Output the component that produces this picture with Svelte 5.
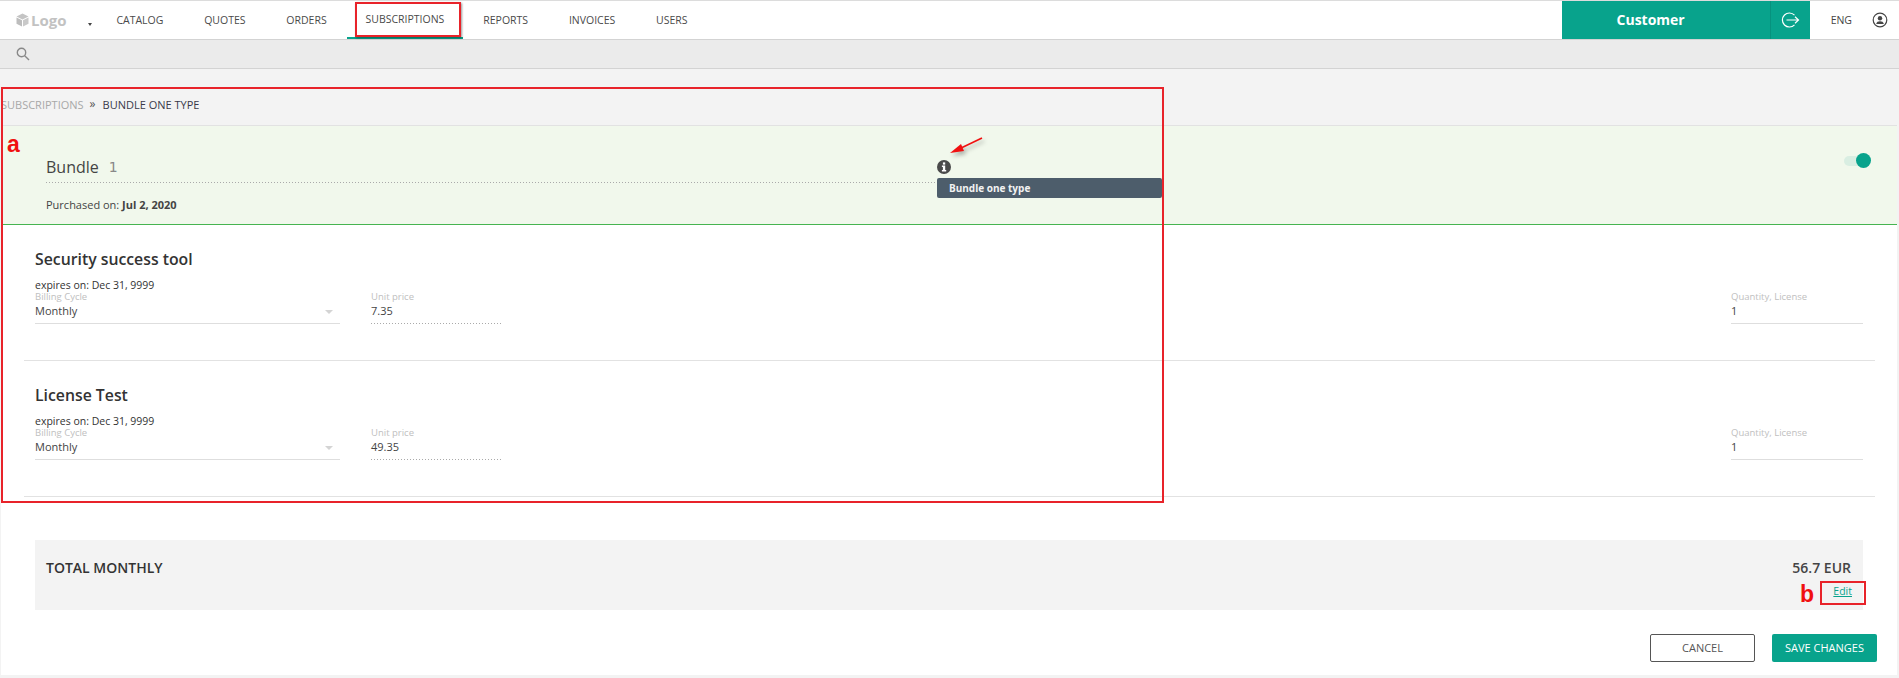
<script>
let items = [
    { name: "Security success tool", price: "7.35" },
    { name: "License Test", price: "49.35" }
];
let nav = ["CATALOG", "QUOTES", "ORDERS", "SUBSCRIPTIONS", "REPORTS", "INVOICES", "USERS"];
</script>

<div class="page">
    <header class="topbar">
        <div class="logo">
            <svg width="13" height="14" viewBox="0 0 13 14"><path d="M6.5 0.5 12.5 3.5 6.5 6.5 0.5 3.5Z" fill="#c4c4c4"/><path d="M0.5 4.5 6 7.2V13.5L0.5 10.7Z" fill="#bdbdbd"/><path d="M12.5 4.5 7 7.2V13.5L12.5 10.7Z" fill="#c9c9c9"/></svg>
            <span>Logo</span>
        </div>
        <span class="caret"></span>
        <nav>
            {#each nav as link}
                <span class="nav_item" class:active={link == "SUBSCRIPTIONS"}>{link}</span>
            {/each}
        </nav>
        <div class="customer">
            <div class="customer_name">Customer</div>
            <div class="logout">
                <svg width="20" height="18" viewBox="0 0 20 18" fill="none" stroke="#fff" stroke-width="1.2"><path d="M14.5 4.2A7 7 0 1 0 14.5 13.8"/><path d="M6.5 9H18.5M15 5.8 18.5 9 15 12.2"/></svg>
            </div>
        </div>
        <span class="lang">ENG</span>
        <svg class="user" width="16" height="16" viewBox="0 0 16 16"><circle cx="8" cy="8" r="6.8" fill="none" stroke="#444" stroke-width="1.2"/><circle cx="8" cy="6.2" r="2.2" fill="#444"/><path d="M4.2 12C4.6 9.8 6 9.2 8 9.2S11.4 9.8 11.8 12Z" fill="#444"/></svg>
    </header>

    <div class="searchbar">
        <svg width="14" height="14" viewBox="0 0 14 14" fill="none" stroke="#888" stroke-width="1.4"><circle cx="5.5" cy="5.5" r="4.2"/><path d="M8.7 8.7 13 13"/></svg>
    </div>

    <div class="crumbs">
        <span class="crumb_link">SUBSCRIPTIONS</span>
        <span class="crumb_sep">»</span>
        <span class="crumb_now">BUNDLE ONE TYPE</span>
    </div>

    <section class="bundle">
        <div class="bundle_left">
            <div class="bundle_title dotted"><span>Bundle</span><span class="bundle_num">1</span></div>
            <div class="purchased">Purchased on: <b>Jul 2, 2020</b></div>
        </div>
        <div class="bundle_info">
            <svg width="14" height="14" viewBox="0 0 14 14"><circle cx="7" cy="7" r="7" fill="#4a4a4a"/><rect x="5.9" y="2.4" width="2.3" height="2.2" fill="#fff"/><path d="M4.9 5.6H8.2V10.1H9.2V11.5H4.9V10.1H5.9V7H4.9Z" fill="#fff"/></svg>
            <div class="tooltip">Bundle one type</div>
        </div>
        <div class="toggle"><span class="knob"></span></div>
    </section>

    <main class="content">
        {#each items as item}
            <div class="item">
                <h3>{item.name}</h3>
                <div class="expires">expires on: Dec 31, 9999</div>
                <div class="fields">
                    <div class="field billing">
                        <label>Billing Cycle</label>
                        <div class="value">Monthly<span class="arrow"></span></div>
                    </div>
                    <div class="field price">
                        <label>Unit price</label>
                        <div class="value dotted">{item.price}</div>
                    </div>
                    <div class="field qty">
                        <label>Quantity, License</label>
                        <div class="value">1</div>
                    </div>
                </div>
            </div>
        {/each}

        <div class="total">
            <span class="total_label">TOTAL MONTHLY</span>
            <div class="total_right">
                <span class="total_sum">56.7 EUR</span>
                <a href="#edit" class="edit">Edit</a>
            </div>
        </div>

        <div class="actions">
            <button class="btn cancel">CANCEL</button>
            <button class="btn save">SAVE CHANGES</button>
        </div>
    </main>

    <!-- annotations drawn over the screenshot -->
    <div class="mark mark_nav"></div>
    <div class="mark mark_a"></div>
    <div class="mark mark_b"></div>
    <span class="letter letter_a">a</span>
    <span class="letter letter_b">b</span>
    <svg class="red_arrow" width="38" height="24" viewBox="0 0 38 24"><path d="M34 4 11 15" stroke="#f01010" stroke-width="1.6"/><path d="M2 19 13 10 16 17Z" fill="#f01010"/></svg>
</div>

<style>
:global(body) {
    background: #fff;
    font-family: "Open Sans", sans-serif;
    color: #333;
}

.page {
    position: relative;
    width: 1899px;
    height: 678px;
    overflow: hidden;
    background: #f3f3f3;
}

.topbar {
    display: flex;
    align-items: center;
    height: 39px;
    box-sizing: border-box;
    border-top: 1px solid #dcdcdc;
    background: #fff;
}

.logo {
    display: flex;
    align-items: center;
    gap: 2px;
    margin-left: 16px;
    width: 72px;
    color: #c2c2c2;
    font-size: 15px;
    font-weight: 700;
}

.caret {
    width: 0;
    height: 0;
    margin-top: 9px;
    border-left: 2.5px solid transparent;
    border-right: 2.5px solid transparent;
    border-top: 3px solid #444;
}

nav {
    display: flex;
    margin-left: 4px;
    height: 100%;
    flex: 1;
}

.nav_item {
    display: flex;
    align-items: center;
    height: 38px;
    box-sizing: border-box;
    padding: 0 20.4px;
    font-size: 10.5px;
    color: #4a4a4a;
}

.nav_item.active {
    padding: 0 18.5px;
    border-bottom: 2px solid #08a38c;
}

.customer {
    display: flex;
    width: 248px;
    height: 38px;
    background: #08a38c;
    color: #fff;
}

.customer_name {
    width: 209px;
    box-sizing: border-box;
    padding-right: 30px;
    text-align: center;
    line-height: 38px;
    font-size: 14px;
    font-weight: 700;
    border-right: 1px solid #07927e;
}

.logout {
    flex: 1;
    display: flex;
    align-items: center;
    justify-content: center;
}

.lang {
    margin-left: 21px;
    font-size: 10.5px;
    color: #444;
}

.user {
    margin-left: 20px;
    margin-right: 11px;
}

.searchbar {
    display: flex;
    align-items: center;
    height: 30px;
    box-sizing: border-box;
    padding-left: 16px;
    background: #ebebeb;
    border-top: 1px solid #d3d3d3;
    border-bottom: 1px solid #d3d3d3;
}

.crumbs {
    display: flex;
    align-items: center;
    height: 56px;
    padding-top: 14px;
    box-sizing: border-box;
    font-size: 11px;
    padding-left: 1px;
}

.crumb_link {
    color: #a8a8a8;
}

.crumb_sep {
    margin: 0 7px 2px 6px;
    color: #555;
    font-size: 12px;
}

.crumb_now {
    color: #3a3a4a;
}

.dotted {
    background-image: repeating-linear-gradient(90deg, #aaa 0 1px, transparent 1px 3px);
    background-size: 100% 1px;
    background-position: left bottom;
    background-repeat: no-repeat;
}

.bundle {
    display: flex;
    height: 100px;
    margin: 0 2px 0 1px;
    box-sizing: border-box;
    background: #f1f8ec;
    border-top: 1px solid #e2e2e2;
    border-bottom: 1px solid #46b450;
}

.bundle_left {
    width: 891px;
    margin-left: 45px;
}

.bundle_title {
    display: flex;
    gap: 10px;
    height: 57px;
    padding-top: 30px;
    box-sizing: border-box;
    font-size: 16px;
    line-height: 22px;
    color: #444;
}

.bundle_num {
    color: #888;
    font-family: "DejaVu Sans", sans-serif;
    font-size: 14px;
}

.purchased {
    margin-top: 14px;
    font-size: 11px;
    line-height: 15px;
    color: #444;
}

.bundle_info {
    width: 225px;
    padding-top: 34px;
}

.bundle_info svg {
    display: block;
}

.tooltip {
    margin-top: 4px;
    height: 20px;
    padding-left: 12px;
    border-radius: 2px;
    background: #4d5d6b;
    color: #f2f2f2;
    font-size: 10px;
    font-weight: 700;
    line-height: 20px;
}

.toggle {
    position: relative;
    width: 24px;
    height: 10px;
    margin: 30px 0 0 682px;
    border-radius: 5px;
    background: #d9eee2;
}

.knob {
    position: absolute;
    right: -3px;
    top: -3px;
    width: 15px;
    height: 15px;
    border-radius: 50%;
    background: #08a38c;
}

.content {
    height: 450px;
    margin: 0 2px 0 1px;
    background: #fff;
}

.item {
    height: 136px;
    margin: 0 22px 0 23px;
    padding: 23px 0 0 11px;
    box-sizing: border-box;
    border-bottom: 1px solid #e2e2e2;
}

h3 {
    margin: 0;
    font-size: 15.8px;
    font-weight: 600;
    line-height: 22px;
    color: #333;
}

.expires {
    margin-top: 8px;
    font-size: 10.5px;
    line-height: 14px;
    color: #333;
}

.fields {
    display: flex;
}

.field label {
    display: block;
    font-size: 9.5px;
    line-height: 10px;
    color: #c0c0c0;
}

.value {
    position: relative;
    height: 22px;
    box-sizing: border-box;
    font-size: 11px;
    line-height: 17px;
    color: #444;
    border-bottom: 1px solid #dedede;
}

.billing {
    width: 305px;
    margin-right: 31px;
}

.arrow {
    position: absolute;
    right: 7px;
    top: 8px;
    border-left: 4px solid transparent;
    border-right: 4px solid transparent;
    border-top: 4px solid #d4d4d4;
}

.price {
    width: 130px;
}

.price .value {
    border-bottom: none;
}

.qty {
    width: 132px;
    margin-left: auto;
    margin-right: 12px;
}

.total {
    display: flex;
    justify-content: space-between;
    height: 70px;
    margin: 43px 34px 0 34px;
    padding: 19px 12px 0 11px;
    box-sizing: border-box;
    background: #f3f3f3;
}

.total_label {
    font-size: 14px;
    font-weight: 600;
    line-height: 18px;
    color: #333;
}

.total_right {
    display: flex;
    flex-direction: column;
    align-items: flex-end;
}

.total_sum {
    font-size: 14px;
    font-weight: 600;
    line-height: 18px;
    color: #444;
}

.edit {
    margin-top: 7px;
    margin-right: -1px;
    font-size: 10.5px;
    color: #08a38c;
}

.actions {
    display: flex;
    justify-content: flex-end;
    gap: 17px;
    margin: 24px 20px 0 0;
}

.btn {
    width: 105px;
    height: 28px;
    padding: 0 0 2px;
    border-radius: 2px;
    font-family: "Open Sans", sans-serif;
    font-size: 11px;
}

.cancel {
    background: #fff;
    border: 1px solid #555;
    color: #555;
}

.save {
    background: #08a38c;
    border: none;
    color: #fff;
}

.mark {
    position: absolute;
    box-sizing: border-box;
    border: 2px solid #e8232a;
}

.mark_nav {
    left: 355px;
    top: 2px;
    width: 106px;
    height: 35px;
    box-shadow: 1px 1px 2px rgba(0, 0, 0, 0.4);
}

.mark_a {
    left: 1px;
    top: 87px;
    width: 1163px;
    height: 416px;
}

.mark_b {
    left: 1820px;
    top: 581px;
    width: 46px;
    height: 24px;
}

.letter {
    position: absolute;
    font-family: "Liberation Sans", sans-serif;
    font-size: 23px;
    font-weight: 700;
    color: #f01010;
    line-height: 20px;
}

.letter_a {
    left: 7px;
    top: 134px;
}

.letter_b {
    left: 1800px;
    top: 584px;
}

.red_arrow {
    position: absolute;
    left: 948px;
    top: 134px;
    filter: drop-shadow(2px 3px 2px rgba(0, 0, 0, 0.3));
}
</style>
